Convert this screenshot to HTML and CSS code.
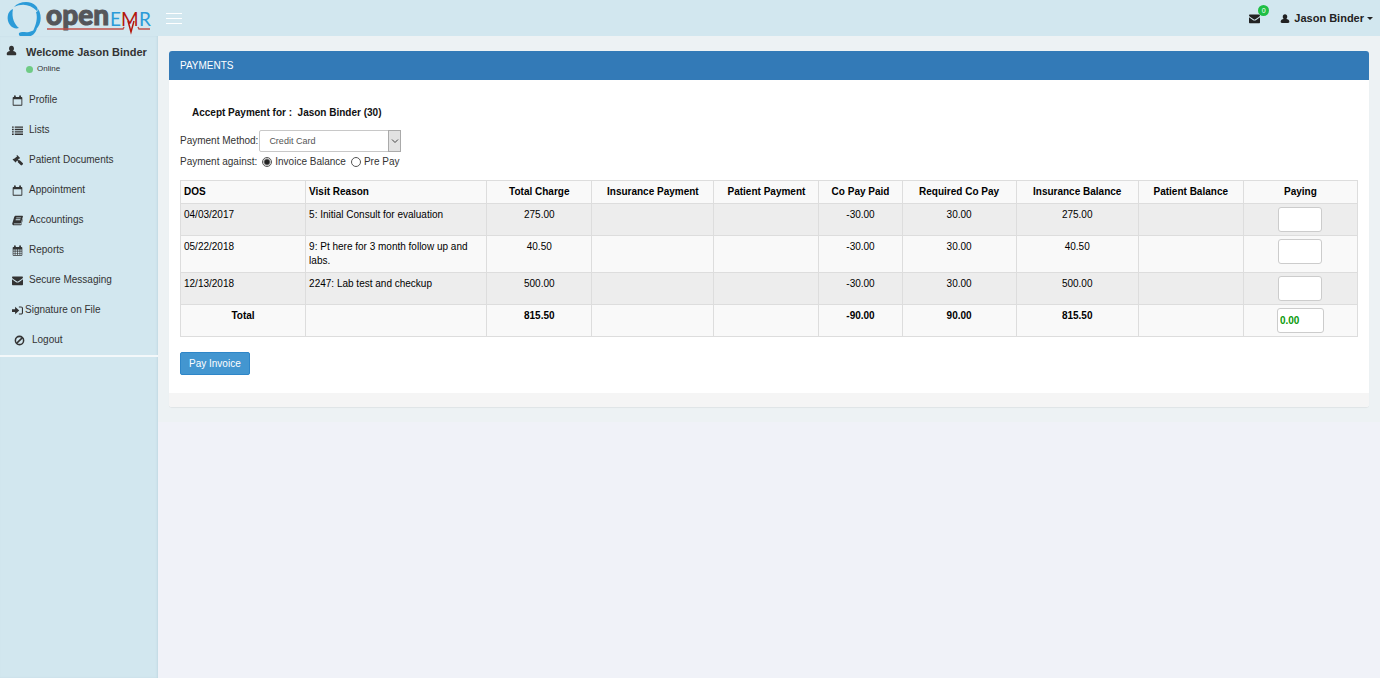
FILE: index.html
```html
<!DOCTYPE html>
<html lang="en">
<head>
<meta charset="utf-8">
<title>OpenEMR Patient Portal - Payments</title>
<link rel="stylesheet" href="styles.css">
</head>
<body>
<svg class="sprite" aria-hidden="true">
  <symbol id="user" viewBox="0 0 16 16"><path d="M8 1c2.300 0 3.600 1.700 3.600 4.100 0 1.500-.6 2.900-1.500 3.600C12.800 9 15 10.300 15 13.200c0 1.200-.8 1.800-2 1.800H3c-1.200 0-2-.6-2-1.800C1 10.300 3.200 9 5.900 8.700 5 8 4.400 6.600 4.400 5.100 4.400 2.700 5.700 1 8 1z"/></symbol>
  <symbol id="calendar-o" viewBox="0 0 16 16"><path fill-rule="evenodd" d="M2 3h1V1.500C3 .8 3.500.5 4.200.5s1.300.3 1.300 1V3h5V1.500c0-.7.5-1 1.200-1s1.300.3 1.300 1V3h1c.6 0 1 .4 1 1v10.500c0 .6-.4 1-1 1H2c-.6 0-1-.4-1-1V4c0-.6.400-1 1-1zm.3 3.200v8h11.400v-8z"/></symbol>
  <symbol id="calendar" viewBox="0 0 16 16"><path fill-rule="evenodd" d="M2 3h1V1.500C3 .8 3.500.5 4.200.5s1.300.3 1.300 1V3h5V1.500c0-.7.5-1 1.200-1s1.300.3 1.300 1V3h1c.6 0 1 .4 1 1v10.500c0 .6-.4 1-1 1H2c-.6 0-1-.4-1-1V4c0-.6.400-1 1-1zm0 3.500v2h2v-2zm3 0v2h2.500v-2zm3.500 0v2H11v-2zm3.500 0v2h2v-2zm-10 3v2h2v-2zm3 0v2h2.500v-2zm3.500 0v2H11v-2zm3.500 0v2h2v-2zm-10 3v2h2v-2zm3 0v2h2.500v-2zm3.500 0v2H11v-2zm3.500 0v2h2v-2z"/></symbol>
  <symbol id="list" viewBox="0 0 16 16"><path d="M0 2h2.500v2H0zm4 0h12v2H4zM0 5.500h2.500v2H0zm4 0h12v2H4zM0 9h2.500v2H0zm4 0h12v2H4zm-4 3.500h2.500v2H0zm4 0h12v2H4z"/></symbol>
  <symbol id="gavel" viewBox="0 0 16 16"><path d="M7.500 0l4.300 4.300-1.100 1.200-.5-.3-1.400 1.400 1.400 1.400.8-.8 4.500 4.500c.7.700.7 1.300 0 2l-.9.900c-.7.700-1.300.7-2 0L8.100 10.100l.8-.8-1.400-1.400-1.400 1.400.3.500-1.100 1.100L.8 6.700l1.200-1.200.6.300 5-4.100-1.200-.6z"/></symbol>
  <symbol id="book" viewBox="0 0 16 16"><path fill-rule="evenodd" d="M5.500 1H15c.8 0 1.100.5.900 1.200l-2.700 9c-.2.700-.7 1-1.400 1H3.200c-.8 0-.8 1.200 0 1.200h9.200c.5 0 .8-.3 1-.8l2-6.900.5.500-2.200 7.800c-.2.700-.8 1-1.500 1H2.800C1 15 0 13.500.4 12.200L3.200 3c.3-1.200 1.100-2 2.300-2zM6.300 3.700L6 4.900h6.700l.3-1.200zm-.8 2.600l-.3 1.200h6.700l.3-1.200z"/></symbol>
  <symbol id="mail" viewBox="0 0 16 16"><path d="M1.500 2h13C15.400 2 16 2.600 16 3.400c0 .8-.5 1.500-1.300 2L9.300 9.200c-.9.600-1.700.600-2.600 0L1.300 5.400C.5 4.900 0 4.200 0 3.400 0 2.600.6 2 1.500 2zM0 6.200l6 4.200c1.300.9 2.700.9 4 0l6-4.200v7.300c0 .8-.6 1.500-1.500 1.500h-13C.6 15 0 14.300 0 13.500z"/></symbol>
  <symbol id="signin" viewBox="0 0 16 16"><path d="M0 6h4.500V2.500L10.500 8l-6 5.500V10H0zm10-3.800h3c2 0 3 1 3 3v5.600c0 2-1 3-3 3h-3v-1.500h3c1 0 1.400-.5 1.400-1.400V5.100c0-.9-.4-1.400-1.400-1.400h-3z"/></symbol>
  <symbol id="ban" viewBox="0 0 16 16"><g fill="none" stroke="currentColor" stroke-width="2.200"><circle cx="8" cy="8" r="6"/><path d="M3.800 12.200l8.400-8.400"/></g></symbol>
</svg>

<header class="topbar">
  <a class="brand" href="#" aria-label="openEMR">
    <svg class="logo" viewBox="0 0 158 38">
      <g fill="#2b9bd8">
        <path d="M13 9C7 11 6 20 10 25c2 3 6 4 9 3C15 25 11 18 13 9z"/>
        <path d="M14 7C19 1 31 0 36 6c2 2 2 4 1 5C30 4 22 3 14 7z"/>
        <path d="M38 9c5 7 3 19-5 22 3-6 5-13 3-19 1 0 2-1 2-3z"/>
        <path d="M19 33c3-2 6 0 10-1 3-1 6-2 8-4-1 5-5 9-11 9-4 1-8-1-7-4z"/>
      </g>
      <text class="logo-open" x="46" y="25">open</text>
      <text class="logo-thin" x="110" y="26">E</text>
      <text class="logo-thin logo-red" x="121" y="26">M</text>
      <text class="logo-thin" x="139" y="26">R</text>
      <path d="M47 29h76l1-2M138 27l1 2h11" fill="none" stroke="#c0504a" stroke-width="1.500"/>
      <path d="M128 21l3 11 3-11" fill="none" stroke="#b5160c" stroke-width="1.500"/>
    </svg>
  </a>
  <button class="menu-toggle" type="button" aria-label="Toggle navigation"><span></span><span></span><span></span></button>
  <nav class="top-links" aria-label="Account">
    <a class="messages" href="#" aria-label="Messages"><svg class="icon"><use href="#mail"/></svg><span class="badge">0</span></a>
    <a class="account" href="#"><svg class="icon"><use href="#user"/></svg>Jason Binder<span class="caret"></span></a>
  </nav>
</header>

<div class="wrapper">
  <aside class="sidebar">
    <div class="user-panel">
      <svg class="icon"><use href="#user"/></svg>
      <div><p class="welcome">Welcome Jason Binder</p><p class="status">Online</p></div>
    </div>
    <nav aria-label="Main">
      <ul class="menu">
        <li><a href="#"><svg class="icon"><use href="#calendar-o"/></svg>Profile</a></li>
        <li><a href="#"><svg class="icon"><use href="#list"/></svg>Lists</a></li>
        <li><a href="#"><svg class="icon"><use href="#gavel"/></svg>Patient Documents</a></li>
        <li><a href="#"><svg class="icon"><use href="#calendar-o"/></svg>Appointment</a></li>
        <li><a href="#"><svg class="icon"><use href="#book"/></svg>Accountings</a></li>
        <li><a href="#"><svg class="icon"><use href="#calendar"/></svg>Reports</a></li>
        <li><a href="#"><svg class="icon"><use href="#mail"/></svg>Secure Messaging</a></li>
        <li><a class="tight" href="#"><svg class="icon"><use href="#signin"/></svg>Signature on File</a></li>
        <li><a class="wide" href="#"><svg class="icon"><use href="#ban"/></svg>Logout</a></li>
      </ul>
    </nav>
  </aside>

  <main class="content">
    <section class="panel">
      <h1 class="panel-heading">PAYMENTS</h1>
      <form class="panel-body">
        <p class="payee">Accept Payment for :&nbsp; Jason Binder (30)</p>
        <div class="field">
          <label for="method">Payment Method:</label>
          <span class="select"><select id="method"><option>Credit Card</option></select><span class="arrow"><svg viewBox="0 0 8 8"><path d="M1 2.500l3 3 3-3" fill="none" stroke="#444"/></svg></span></span>
        </div>
        <div class="field against">
          <span>Payment against:</span>
          <label><input type="radio" name="against" checked>Invoice Balance</label>
          <label><input type="radio" name="against">Pre Pay</label>
        </div>
        <table class="invoices">
          <colgroup><col class="c-dos"><col class="c-reason"><col class="c-mid"><col class="c-long"><col class="c-mid"><col class="c-short"><col class="c-pay"><col class="c-long"><col class="c-mid"><col class="c-pay"></colgroup>
          <thead>
            <tr><th>DOS</th><th>Visit Reason</th><th>Total Charge</th><th>Insurance Payment</th><th>Patient Payment</th><th>Co Pay Paid</th><th>Required Co Pay</th><th>Insurance Balance</th><th>Patient Balance</th><th>Paying</th></tr>
          </thead>
          <tbody>
            <tr><td>04/03/2017</td><td>5: Initial Consult for evaluation</td><td>275.00</td><td></td><td></td><td>-30.00</td><td>30.00</td><td>275.00</td><td></td><td><input type="text" aria-label="Paying for 04/03/2017"></td></tr>
            <tr><td>05/22/2018</td><td>9: Pt here for 3 month follow up and labs.</td><td>40.50</td><td></td><td></td><td>-30.00</td><td>30.00</td><td>40.50</td><td></td><td><input type="text" aria-label="Paying for 05/22/2018"></td></tr>
            <tr><td>12/13/2018</td><td>2247: Lab test and checkup</td><td>500.00</td><td></td><td></td><td>-30.00</td><td>30.00</td><td>500.00</td><td></td><td><input type="text" aria-label="Paying for 12/13/2018"></td></tr>
          </tbody>
          <tfoot>
            <tr><td>Total</td><td></td><td>815.50</td><td></td><td></td><td>-90.00</td><td>90.00</td><td>815.50</td><td></td><td><input class="sum" type="text" value="0.00" aria-label="Total paying"></td></tr>
          </tfoot>
        </table>
        <button class="pay" type="button">Pay Invoice</button>
      </form>
      <div class="panel-footer"></div>
    </section>
  </main>
</div>
</body>
</html>
```
FILE: styles.css
```css
* { box-sizing: border-box; }
body {
  margin: 0;
  min-height: 100vh;
  display: flex;
  flex-direction: column;
  background: #f0f2f8;
  color: #333;
  font: 10px/14px "Liberation Sans", Arial, sans-serif;
}
h1, p, ul { margin: 0; padding: 0; }
ul { list-style: none; }
a { color: inherit; text-decoration: none; }
input, select, button { font: inherit; color: inherit; margin: 0; }
.sprite { display: none; }
.icon { width: 11px; height: 11px; fill: currentColor; flex: none; }

.topbar {
  display: flex;
  align-items: center;
  height: 36px;
  background: #d2e7ef;
}
.brand { width: 158px; height: 36px; }
.logo { display: block; width: 158px; height: 38px; overflow: visible; }
.logo-open { font: 900 28px Lato, sans-serif; fill: #55565a; stroke: #55565a; stroke-width: 1px; }
.logo-thin { font: 19px Lato, sans-serif; fill: #2b9bd8; }
.logo-thin.logo-red { fill: #b5160c; }
.menu-toggle {
  display: flex;
  flex-direction: column;
  gap: 4px;
  padding: 0;
  margin-left: 8px;
  border: 0;
  background: none;
}
.menu-toggle span { width: 16px; height: 1px; background: #fff; }
.top-links {
  display: flex;
  align-items: center;
  gap: 20px;
  margin-left: auto;
  padding-right: 7px;
  color: #222;
}
.messages { position: relative; display: flex; }
.badge {
  position: absolute;
  left: 9px;
  top: -8px;
  width: 11px;
  height: 11px;
  border-radius: 50%;
  background: #1fbf45;
  color: #fff;
  font-size: 7px;
  line-height: 11px;
  text-align: center;
}
.account { display: flex; align-items: center; font-size: 11px; font-weight: bold; }
.account .icon { width: 10px; margin-right: 4px; }
.caret {
  margin-left: 3px;
  border: 3px solid transparent;
  border-top-color: currentColor;
  border-bottom: 0;
}

.wrapper { flex: 1; display: flex; }
.sidebar {
  width: 158px;
  flex: none;
  background: #d2e7ef;
  box-shadow: inset -1px 0 2px rgba(60, 110, 130, .1);
}
.user-panel {
  display: flex;
  align-items: flex-start;
  gap: 9px;
  padding: 9px 6px 0;
}
.welcome { font-size: 11px; font-weight: bold; line-height: 14px; }
.status { display: flex; align-items: center; gap: 4px; margin-top: 3px; font-size: 8px; }
.status::before { content: ""; width: 7px; height: 7px; border-radius: 50%; background: #6fcb85; }
.menu { padding-top: 9px; border-bottom: 2px solid #f3f8fa; }
.menu a {
  display: flex;
  align-items: center;
  gap: 6px;
  height: 30px;
  padding-left: 12px;
}
.menu a.tight { gap: 2px; }
.menu a.wide { gap: 7px; padding-left: 14px; }

.content {
  flex: 1;
  align-self: flex-start;
  min-width: 0;
  padding: 15px 11px;
  background: #edf2f4;
}
.panel { background: #fff; border-radius: 3px; box-shadow: 0 1px 1px rgba(0, 0, 0, .06); }
.panel-heading {
  padding: 7px 11px;
  border-radius: 3px 3px 0 0;
  background: #337ab7;
  color: #fff;
  font-size: 10px;
  font-weight: normal;
  line-height: 15px;
}
.panel-body { padding: 25px 11px 18px; }
.payee { padding-left: 12px; color: #111; font-size: 10px; font-weight: bold; line-height: 15px; }
.field { display: flex; align-items: center; gap: 1px; margin-top: 10px; }
.select { position: relative; display: flex; width: 142px; height: 22px; }
.select select {
  width: 100%;
  padding: 0 9px;
  border: 1px solid #c8c8c8;
  border-radius: 2px;
  background: #fff;
  color: #555;
  font-size: 9px;
  appearance: none;
}
.arrow {
  position: absolute;
  right: 0;
  top: 0;
  bottom: 0;
  display: flex;
  align-items: center;
  justify-content: center;
  width: 13px;
  border: 1px solid #aaa;
  background: #e2e2e2;
  pointer-events: none;
}
.arrow svg { width: 8px; height: 8px; }
.against { gap: 5px; margin-top: 3px; }
.against label { display: flex; align-items: center; gap: 3px; }
.against input {
  width: 10px;
  height: 10px;
  border: 1px solid #555;
  border-radius: 50%;
  background: #fff;
  appearance: none;
}
.against input:checked { background: radial-gradient(#222 0 2px, #fff 4px); }

.invoices {
  width: 100%;
  margin-top: 11px;
  border-collapse: collapse;
  table-layout: fixed;
  background: #f9f9f9;
  color: #000;
}
.invoices th, .invoices td {
  padding: 4px 3px;
  border: 1px solid #ddd;
  text-align: center;
  vertical-align: top;
}
.invoices th { white-space: nowrap; }
.invoices tbody tr:nth-child(odd) { background: #ededed; }
.invoices tbody td:nth-child(-n+2), .invoices th:nth-child(-n+2) { text-align: left; }
.invoices tfoot { font-weight: bold; }
.c-dos { width: 125px; }
.c-reason { width: 181px; }
.c-mid { width: 105px; }
.c-long { width: 122px; }
.c-short { width: 83px; }
.c-pay { width: 114px; }
.invoices input {
  display: block;
  width: 44px;
  height: 25px;
  margin: -1px auto;
  padding: 0 2px;
  border: 1px solid #ccc;
  border-radius: 3px;
  background: #fff;
}
.invoices .sum { width: 47px; color: #0a9a0a; font-weight: bold; }
.pay {
  display: block;
  height: 23px;
  margin-top: 15px;
  padding: 0 8px;
  border: 1px solid #2e86c8;
  border-radius: 2px;
  background: #4396d0;
  color: #fff;
}
.panel-footer { height: 14px; background: #f5f5f5; border-radius: 0 0 3px 3px; }
```
